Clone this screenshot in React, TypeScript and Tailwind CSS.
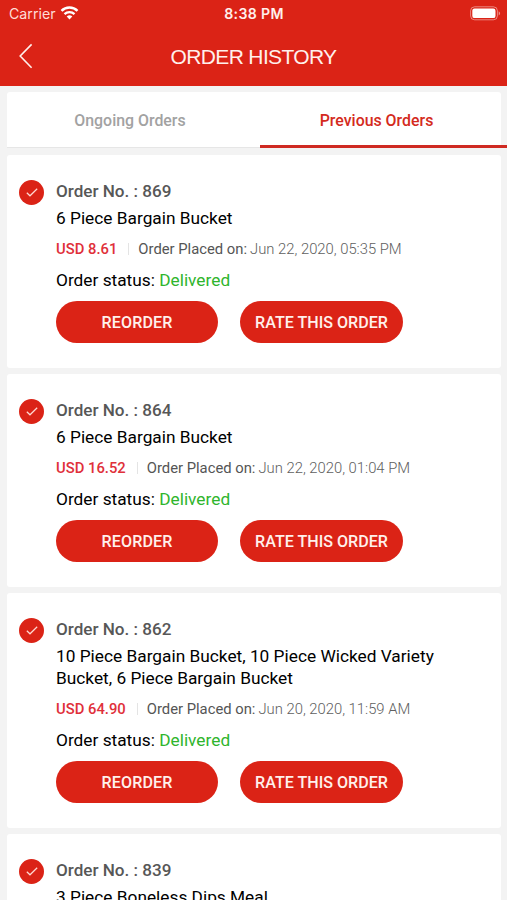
import { useState } from "react";

interface Order {
  id: number;
  items: string;
  details?: {
    price: string;
    placedOn: string;
    status: string;
  };
}

const ORDERS: Order[] = [
  {
    id: 869,
    items: "6 Piece Bargain Bucket",
    details: { price: "USD 8.61", placedOn: "Jun 22, 2020, 05:35 PM", status: "Delivered" },
  },
  {
    id: 864,
    items: "6 Piece Bargain Bucket",
    details: { price: "USD 16.52", placedOn: "Jun 22, 2020, 01:04 PM", status: "Delivered" },
  },
  {
    id: 862,
    items: "10 Piece Bargain Bucket, 10 Piece Wicked Variety Bucket, 6 Piece Bargain Bucket",
    details: { price: "USD 64.90", placedOn: "Jun 20, 2020, 11:59 AM", status: "Delivered" },
  },
  { id: 839, items: "3 Piece Boneless Dips Meal" },
];

function StatusBar() {
  return (
    <div className="grid h-7 grid-cols-3 items-center pl-[9px] pr-[6px] font-['Inter',sans-serif] text-white">
      <div className="flex items-center gap-[6px]">
        <span className="text-[14.2px] leading-7 text-[#ffdcd6]">Carrier</span>
        <svg width="19" height="14" viewBox="0 0 18 14" fill="none" stroke="currentColor" className="-ml-0.5 -mt-0.5">
          <path d="M1 4.9a11.4 11.4 0 0 1 16 0" strokeWidth="2.5" />
          <path d="M4 8.1a7.1 7.1 0 0 1 10 0" strokeWidth="2.3" />
          <path d="M9 13.5 6.2 10.6a4 4 0 0 1 5.6 0Z" fill="currentColor" stroke="none" />
        </svg>
      </div>
      <span className="-ml-0.5 text-center text-[14.1px] font-semibold leading-7 tracking-[0.35px] text-[#fff0ec]">8:38 PM</span>
      <svg width="31" height="15" viewBox="0 0 31 15" fill="none" className="-mt-0.5 justify-self-end">
        <rect x="0.6" y="0.8" width="26.8" height="13" rx="4" stroke="white" strokeOpacity="0.45" />
        <rect x="2.3" y="2.5" width="23.2" height="9.6" rx="2.2" fill="white" />
        <path d="M28.7 5.2c1.9.8 1.9 3.4 0 4.2Z" fill="white" fillOpacity="0.5" />
      </svg>
    </div>
  );
}

function OrderCard({ order }: { order: Order }) {
  const { id, items, details } = order;

  return (
    <article className="flex rounded-[3px] bg-white pb-[25px] pl-3 pr-[50px] pt-[25px]">
      <div className="flex size-[25px] shrink-0 items-center justify-center rounded-full bg-[#db2316]">
        <svg width="12" height="9" viewBox="0 0 12 9" fill="none" stroke="#ffd9d2" strokeWidth="1.2">
          <path d="M0.8 4.8 4 7.8 11.2 0.8" />
        </svg>
      </div>
      <div className="ml-3 flex-1">
        <h2 className="text-[17.1px] font-medium leading-[23px] text-[#575757]">Order No. : {id}</h2>
        <p className="mt-[4px] text-[17.3px] leading-[22px] text-black">{items}</p>
        {details && (
          <>
            <div className="mt-[10px] flex h-5 items-center whitespace-nowrap text-[14.8px] leading-5">
              <span className="font-medium text-[#e0303a]">{details.price}</span>
              <span className="ml-[11px] mr-[9px] h-3 w-px bg-[#e4e4e4]" />
              <span className="text-[#555555]">Order Placed on:</span>
              <span className="ml-[3px] font-light text-[#606060]">{details.placedOn}</span>
            </div>
            <p className="mt-[10px] text-[17.3px] leading-[22px] text-black">
              Order status: <span className="text-[#2fb52d]">{details.status}</span>
            </p>
            <div className="mt-[10px] flex gap-[22px] text-[16.1px] font-medium text-[#fff0ec]">
              <button type="button" className="h-[42px] w-[162px] rounded-full bg-[#db2316] pt-0.5 tracking-[0.1px]">
                REORDER
              </button>
              <button type="button" className="h-[42px] w-[163px] whitespace-nowrap rounded-full bg-[#db2316] pt-0.5">
                RATE THIS ORDER
              </button>
            </div>
          </>
        )}
      </div>
    </article>
  );
}

export default function App() {
  const [tab, setTab] = useState<"ongoing" | "previous">("previous");

  return (
    <div className="h-[900px] w-[507px] overflow-hidden bg-[#f3f3f3] font-['Roboto',sans-serif]">
      <header className="h-[86px] bg-[#db2316]">
        <StatusBar />
        <div className="grid h-14 grid-cols-[60px_1fr_60px] items-center">
          <button type="button" aria-label="Back" className="pl-[19px]">
            <svg width="14" height="26" viewBox="0 0 14 26" fill="none" stroke="#fff0ec" strokeWidth="1.6">
              <path d="M12.6 1.4 1.2 13 12.6 24.8" />
            </svg>
          </button>
          <h1 className="pt-px text-center font-['Liberation_Sans',sans-serif] text-[21px] tracking-[-0.65px] text-[#fff0ec]">
            ORDER HISTORY
          </h1>
        </div>
      </header>

      {/* Tabs */}
      <nav className="mt-[6px] flex h-[56px] pl-[7px] text-[15.9px] font-medium">
        <button
          type="button"
          onClick={() => setTab("ongoing")}
          className={`w-[253px] rounded-tl-[3px] border-b bg-white pr-[7px] pt-[3px] ${tab === "ongoing" ? "border-[#db2316] text-[#d42a20]" : "border-[#e6e6e6] text-[#a2a2a2]"}`}
        >
          Ongoing Orders
        </button>
        <div className="relative w-[241px] rounded-tr-[3px] bg-white">
          <button
            type="button"
            onClick={() => setTab("previous")}
            className={`h-full w-full pr-2 pt-0.5 ${tab === "previous" ? "text-[#d42a20]" : "text-[#a2a2a2]"}`}
          >
            Previous Orders
          </button>
          {tab === "previous" && <span className="absolute bottom-0 left-0 h-[3px] w-[247px] bg-[#cf2a22]" />}
        </div>
      </nav>

      <main className="mt-[7px] flex flex-col gap-[6px] pl-[7px] pr-[6px]">
        {ORDERS.map((order) => (
          <OrderCard key={order.id} order={order} />
        ))}
      </main>
    </div>
  );
}
